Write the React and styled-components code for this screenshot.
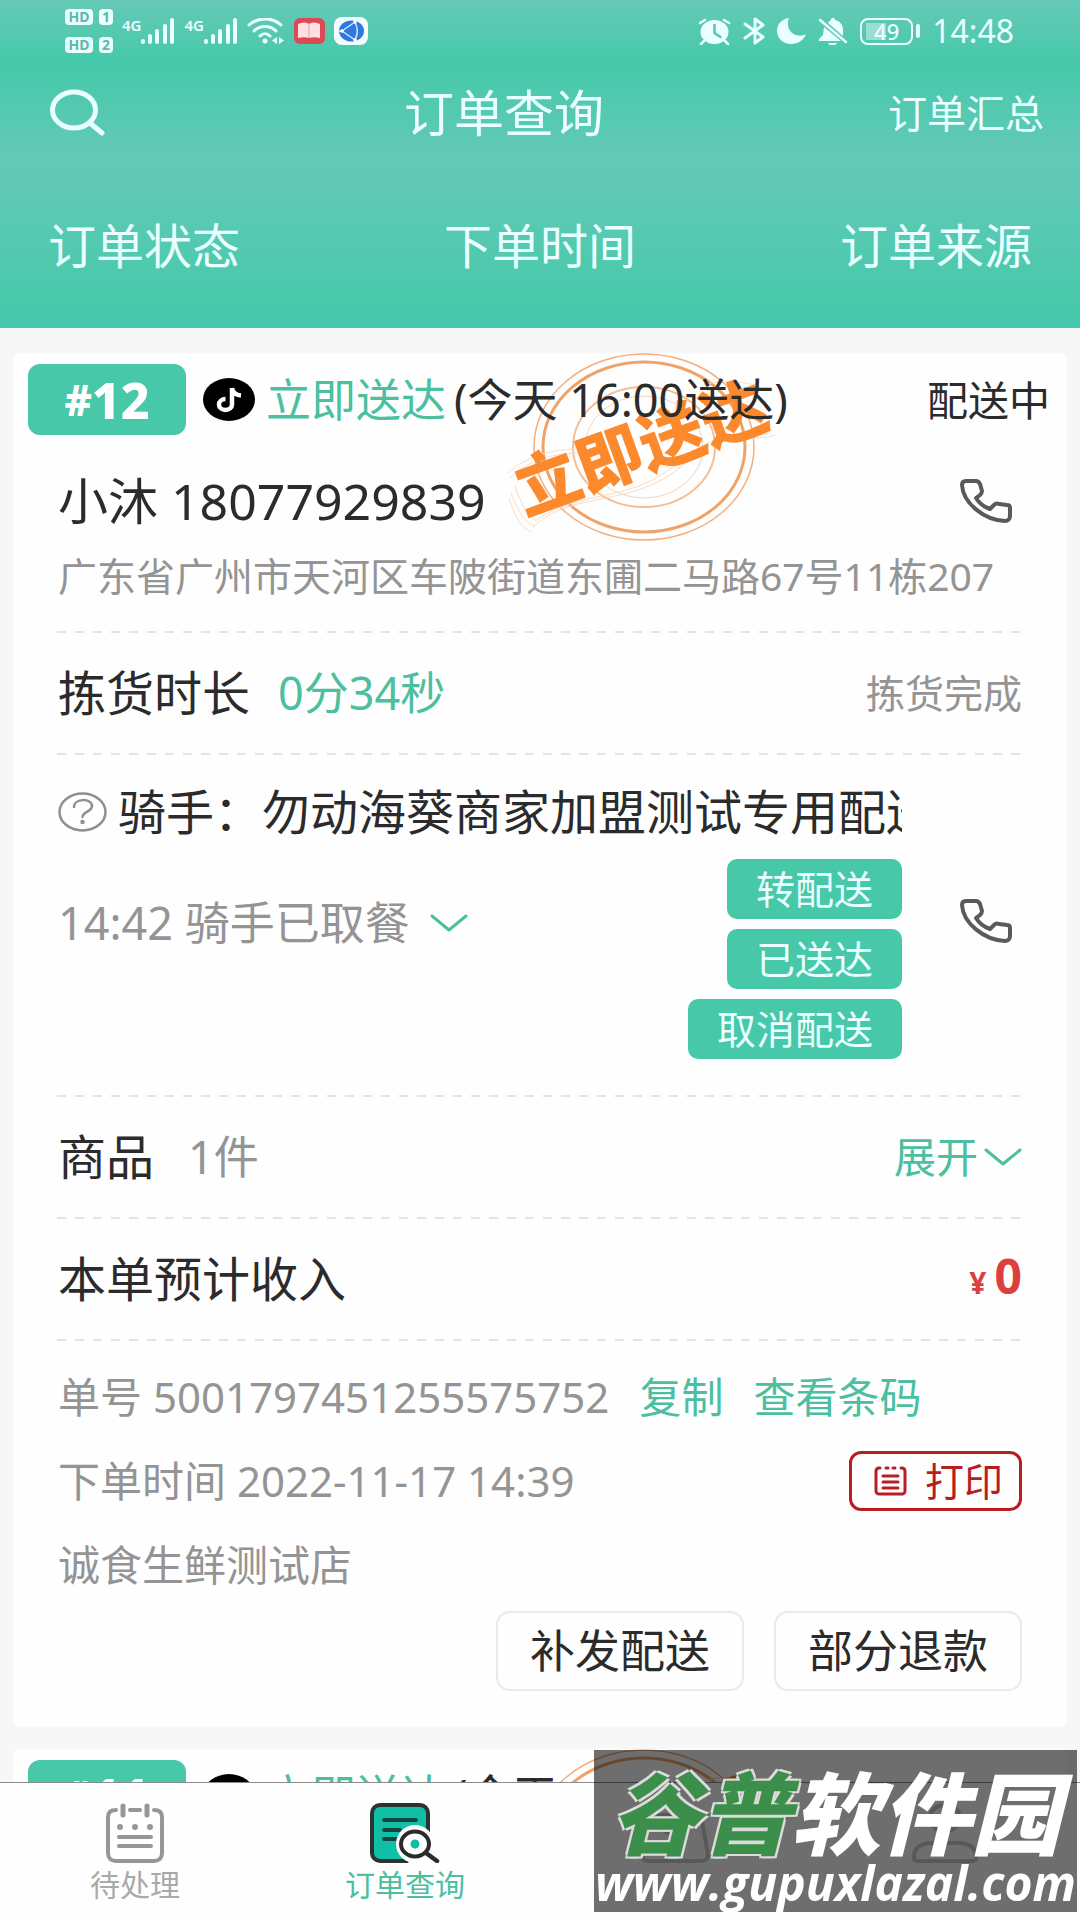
import React from "react";
import styled, { createGlobalStyle } from "styled-components";

const c = {
  green: "#46c8a9",
  greenText: "#4bbf9f",
  ink: "#2b2b2b",
  grey: "#949494",
  pale: "#eaffff",
  red: "#b91d22",
};

const Global = createGlobalStyle`
  *, *::before, *::after { box-sizing: border-box; }
  body {
    margin: 0;
    background: #f7f7f7;
    color: ${c.ink};
    font-family: "Noto Sans", "Noto Sans CJK SC", sans-serif;
  }
  button {
    margin: 0;
    padding: 0;
    border: 0;
    background: none;
    color: inherit;
    font-family: inherit;
    cursor: pointer;
  }
  h1, h2, p { margin: 0; font-weight: 400; }
  svg { display: block; flex: none; }
`;

const Screen = styled.div`
  display: flex;
  flex-direction: column;
  height: 100vh;
  overflow: hidden;
`;

/* ---------- top bar ---------- */

const TopBar = styled.header`
  flex: none;
  color: ${c.pale};
  background: linear-gradient(#66c9b7 0, #46c9aa 62px, #48c9ab 72px, #64c9b8 158px, #62c9b7 176px, #48c9ab 300px, #48c8ac 100%);
`;

const StatusBar = styled.div`
  display: flex;
  justify-content: space-between;
  height: 62px;
  padding: 0 66px 0 65px;
`;

const StatusGroup = styled.div`
  display: flex;
  align-items: center;
  height: 62px;
  gap: ${(p) => p.$gap}px;
`;

const SimRows = styled.div`
  display: grid;
  grid-template-columns: 28px 14px;
  gap: 12px 6px;
`;

const Chip = styled.span`
  height: 16px;
  border-radius: 4px;
  background: ${c.pale};
  color: #5cb9a6;
  font-size: 14px;
  font-weight: 700;
  line-height: 16px;
  text-align: center;
`;

const Signal = styled.div`
  display: flex;
  align-items: flex-start;
  font-size: 15px;
  font-weight: 600;
  line-height: 14px;
`;

const Battery = styled.div`
  display: flex;
  align-items: center;
  gap: 3px;
  &::after {
    content: "";
    width: 4px;
    height: 14px;
    border-radius: 2px;
    background: ${c.pale};
  }
`;

const BatteryBody = styled.span`
  width: 53px;
  height: 27px;
  border: 2px solid ${c.pale};
  border-radius: 8px;
  background: linear-gradient(#9bddd0, #9bddd0) 4px 3px / 20px 17px no-repeat;
  font-size: 22px;
  font-weight: 500;
  line-height: 23px;
  text-align: center;
`;

const Clock = styled.time`
  font-size: 32px;
  line-height: 40px;
`;

const TitleRow = styled.div`
  display: flex;
  align-items: center;
  justify-content: space-between;
  height: 102px;
  padding: 0 36px 0 50px;
`;

const SearchButton = styled.button`
  width: 70px;
`;

const Title = styled.h1`
  font-size: 50px;
  line-height: 60px;
`;

const HeaderButton = styled.button`
  font-size: ${(p) => p.$size}px;
  line-height: 60px;
`;

const Filters = styled.nav`
  display: flex;
  align-items: center;
  justify-content: space-between;
  height: 164px;
  padding: 0 48px;
`;

/* ---------- order cards ---------- */

const List = styled.main`
  flex: 1;
  min-height: 0;
  padding: 25px 13px 0;
  overflow-y: auto;
  scrollbar-width: none;
`;

const Card = styled.article`
  position: relative;
  margin-bottom: 22px;
  border-radius: 6px;
  background: #fefefe;
`;

const CardHead = styled.div`
  position: relative;
  z-index: 1;
  display: flex;
  align-items: center;
  padding: 11px 17px 0 15px;
`;

const Badge = styled.h2`
  display: flex;
  align-items: center;
  justify-content: center;
  width: 158px;
  height: 71px;
  margin-right: 17px;
  border-radius: 12px;
  background: ${c.green};
  color: #fff;
  font-size: 50px;
  font-weight: 800;
  line-height: 60px;
  small { font-size: 42px; }
`;

const DeliveryTime = styled.p`
  flex: 1;
  margin-left: 11px;
  font-size: 45px;
  line-height: 60px;
  white-space: nowrap;
  em {
    margin-right: 8px;
    color: ${c.greenText};
    font-style: normal;
  }
`;

const State = styled.span`
  font-size: 41px;
  line-height: 60px;
`;

const StampMark = styled.div`
  position: absolute;
  top: 0;
  left: 487px;
  width: 300px;
  height: 190px;
  svg { position: absolute; inset: 0; }
`;

const StampText = styled.span`
  position: absolute;
  top: 45px;
  left: 8px;
  color: #fc8a2c;
  font-size: 66px;
  font-weight: 900;
  line-height: 96px;
  white-space: nowrap;
  transform: rotate(-20deg);
`;

const Body = styled.div`
  position: relative;
  padding: 0 45px;
`;

const Divider = styled.hr`
  height: 2px;
  margin: 0 1px 0 -1px;
  border: 0;
  background: repeating-linear-gradient(90deg, #e4e4e4 0 9px, transparent 9px 18px);
`;

const Contact = styled.div`
  display: flex;
  align-items: center;
  justify-content: space-between;
  height: 80px;
  margin-top: 26px;
  padding-right: 10px;
  font-size: 50px;
  line-height: 60px;
`;

const Address = styled.p`
  margin: 5px 0 25px;
  color: ${c.grey};
  font-size: 39px;
  line-height: 60px;
  white-space: nowrap;
`;

const Row = styled.div`
  display: flex;
  align-items: center;
  justify-content: space-between;
  height: 120px;
`;

const Cell = styled.div`
  display: flex;
  align-items: ${(p) => p.$align || "center"};
  gap: ${(p) => p.$gap}px;
`;

const Label = styled.span`
  font-size: 48px;
  line-height: 60px;
`;

const Value = styled.span`
  color: ${(p) => p.$color};
  font-size: ${(p) => p.$size}px;
  font-weight: ${(p) => p.$weight || 400};
  line-height: 60px;
`;

const LinkButton = styled.button`
  display: flex;
  align-items: center;
  gap: 6px;
  color: ${c.greenText};
  font-size: 42px;
  line-height: 60px;
`;

const Rider = styled.section`
  display: flex;
  align-items: center;
  gap: 58px;
  padding: 27px 10px 36px 0;
`;

const RiderMain = styled.div`
  flex: 1;
  min-width: 0;
`;

const RiderName = styled.div`
  display: flex;
  align-items: center;
  gap: 11px;
  overflow: hidden;
  white-space: nowrap;
`;

const RiderDetail = styled.div`
  display: flex;
  align-items: flex-start;
  justify-content: space-between;
  margin-top: 17px;
`;

const Progress = styled.button`
  display: flex;
  align-items: center;
  gap: 20px;
  margin-top: 34px;
  color: ${c.grey};
  font-size: 45px;
  line-height: 60px;
`;

const Actions = styled.div`
  display: flex;
  flex-direction: column;
  align-items: flex-end;
  gap: 10px;
`;

const SolidButton = styled.button`
  height: 60px;
  padding: 0 29px;
  border-radius: 10px;
  background: ${c.green};
  color: ${c.pale};
  font-size: 39px;
  line-height: 60px;
`;

const Info = styled.section`
  padding-top: 14px;
  color: ${c.grey};
`;

const InfoRow = styled.div`
  display: flex;
  align-items: center;
  height: 84px;
  gap: 30px;
  font-size: 42px;
  line-height: 60px;
  white-space: nowrap;
`;

const PrintButton = styled.button`
  display: flex;
  align-items: center;
  gap: 18px;
  height: 60px;
  margin-left: auto;
  padding: 0 16px 0 22px;
  border: 3px solid ${c.red};
  border-radius: 12px;
  color: ${c.red};
  font-size: 39px;
  line-height: 54px;
`;

const CardFoot = styled.div`
  display: flex;
  justify-content: flex-end;
  gap: 30px;
  padding: 4px 0 36px;
`;

const OutlineButton = styled.button`
  height: 80px;
  padding: 0 32px;
  border: 2px solid #eaeaea;
  border-radius: 14px;
  font-size: 45px;
  line-height: 76px;
`;

/* ---------- bottom tabs ---------- */

const TabBar = styled.nav`
  display: flex;
  flex: none;
  height: 138px;
  border-top: 1px solid #8c8c8c;
  background: #fefefe;
`;

const Tab = styled.button`
  display: flex;
  flex: 1;
  flex-direction: column;
  align-items: center;
  gap: 2px;
  padding-top: 20px;
  color: ${(p) => (p.$active ? c.greenText : "#a9a9a9")};
  font-size: 30px;
  line-height: 40px;
`;

const Watermark = styled.aside`
  position: fixed;
  right: 3px;
  bottom: 8px;
  z-index: 2;
  width: 483px;
  height: 162px;
  padding-top: 10px;
  background: rgba(0, 0, 0, 0.57);
  color: #fff;
  font-style: italic;
  text-align: center;
  white-space: nowrap;
  pointer-events: none;
`;

const SiteName = styled.div`
  font-family: "Noto Sans CJK SC", sans-serif;
  font-size: 90px;
  font-weight: 900;
  line-height: 98px;
  span {
    color: #3b8f4b;
    text-shadow: -2px -2px 0 #dcdcdc, 2px -2px 0 #dcdcdc, -2px 2px 0 #dcdcdc, 2px 2px 0 #dcdcdc;
  }
`;

const SiteUrl = styled.div`
  font-family: "Open Sans", sans-serif;
  font-size: 48px;
  font-weight: 700;
  line-height: 50px;
`;

/* ---------- drawings ---------- */

const Bars = () => (
  <svg width="34" height="26" viewBox="0 0 34 26" fill={c.pale}>
    <rect x="0" y="21" width="4" height="5" rx="2" />
    <rect x="7" y="16" width="4" height="10" rx="2" />
    <rect x="14" y="11" width="4" height="15" rx="2" />
    <rect x="22" y="6" width="4" height="20" rx="2" />
    <rect x="29" y="0" width="4" height="26" rx="2" />
  </svg>
);

const Wifi = () => (
  <svg width="38" height="26" viewBox="0 0 38 26" fill="none" stroke={c.pale} strokeWidth="3" strokeLinecap="round">
    <path d="M2 7C11-1 25-1 34 7M7 13c6-6 16-6 22 0M13 18c3-3 7-3 10 0" />
    <circle cx="18" cy="23" r="2.500" fill={c.pale} stroke="none" />
    <path d="M30 19v7l-5-3.500zM32 19v7l5-3.500z" fill={c.pale} stroke="none" />
  </svg>
);

const BookApp = () => (
  <svg width="31" height="26" viewBox="0 0 31 26">
    <rect width="31" height="26" rx="6" fill="#dc4a55" />
    <path d="M4 6c4-2 8-2 11 0 3-2 7-2 11 0v14c-4-1-8-1-11 0-3-1-7-1-11 0z" fill="#ffdfe2" />
    <path d="M15 6v14" stroke="#e8a0a6" strokeWidth="1" />
  </svg>
);

const BrowserApp = () => (
  <svg width="34" height="28" viewBox="0 0 34 28">
    <rect width="34" height="28" rx="8" fill="#f1fdff" />
    <ellipse cx="17.500" cy="14" rx="12.500" ry="10.500" fill="#2f78e0" />
    <path d="M8 14L21 5M8 14l13 9M21 5c3 6 3 12 0 18M8 14l-3 0" stroke="#d5eaff" strokeWidth="1.500" fill="none" />
    <g fill="#fff"><circle cx="8" cy="14" r="1.800" /><circle cx="21" cy="5" r="1.800" /><circle cx="21" cy="23" r="1.800" /></g>
  </svg>
);

const Alarm = () => (
  <svg width="33" height="27" viewBox="0 0 33 27" fill="none" stroke={c.pale} strokeLinecap="round">
    <ellipse cx="16.500" cy="14" rx="14" ry="12" fill={c.pale} stroke="none" />
    <path d="M2 5l5-3M31 5l-5-3M6 23l-3 3M27 23l3 3" strokeWidth="2.500" />
    <path d="M16.500 7v8l6 4" stroke="#5cc5b0" strokeWidth="2.500" />
  </svg>
);

const Bluetooth = () => (
  <svg width="22" height="28" viewBox="0 0 22 28" fill="none" stroke={c.pale} strokeWidth="3" strokeLinejoin="round" strokeLinecap="round">
    <path d="M2 7l18 13-8 6V2l8 6L2 21" />
  </svg>
);

const Moon = () => (
  <svg width="29" height="26" viewBox="0 0 29 26" fill={c.pale}>
    <path d="M12 0C5 1 0 6 0 13c0 7 6 13 14 13 7 0 13-4 15-10-3 2-7 2-10 1-7-2-10-10-7-17z" />
  </svg>
);

const BellOff = () => (
  <svg width="30" height="27" viewBox="0 0 30 27" fill={c.pale}>
    <path d="M6 9l17 14H1v-2l4-4zM10 5c1-2 2-2 3-3 0-3 4-3 4 0 5 1 8 5 8 9v7z" />
    <path d="M10 25h9c-1 3-8 3-9 0z" />
    <path d="M2 2l26 22" stroke={c.pale} strokeWidth="2.500" strokeLinecap="round" />
  </svg>
);

const SearchIcon = () => (
  <svg width="55" height="48" viewBox="0 0 55 48" fill="none" stroke={c.pale} strokeWidth="5" strokeLinecap="round">
    <ellipse cx="24" cy="21" rx="21.500" ry="18" />
    <path d="M40 34l12 10" />
  </svg>
);

const NoteLogo = () => (
  <svg width="52" height="43" viewBox="0 0 52 43">
    <ellipse cx="26" cy="21.500" rx="26" ry="21.500" />
    <path d="M29 10v16.500a6.500 5.500 0 1 1-6.500-5.500M29 10c.5 4.500 4 7 9 7.500" fill="none" stroke="#fff" strokeWidth="4.500" />
  </svg>
);

const PhoneIcon = () => (
  <svg width="52" height="44" viewBox="0 0 52 44" fill="none" stroke="#5a5a5a" strokeWidth="4" strokeLinejoin="round">
    <path d="M6 2h10c2 0 3 1 4 3l2 7c0 2-1 3-2 4l-4 3c3 5 8 9 14 11l4-4c1-1 3-2 5-1l8 1c2 0 3 1 3 3v8c0 3-2 5-5 5C24 41 3 24 2 6c0-2 1-4 4-4z" />
  </svg>
);

const Chevron = () => (
  <svg width="38" height="18" viewBox="0 0 38 18" fill="none" stroke={c.greenText} strokeWidth="3" strokeLinecap="round" strokeLinejoin="round">
    <path d="M2 2l17 14L36 2" />
  </svg>
);

const HelpIcon = () => (
  <svg width="49" height="40" viewBox="0 0 49 40" fill="none" stroke="#8f8f8f" strokeWidth="2.500" strokeLinecap="round">
    <ellipse cx="24.500" cy="20" rx="23" ry="18.500" />
    <path d="M16 15c0-9 18-9 18-1 0 6-9 5-9.500 11" />
    <circle cx="24.500" cy="30" r="1" />
  </svg>
);

const PrintIcon = () => (
  <svg width="33" height="30" viewBox="0 0 33 30" fill="none" stroke={c.red} strokeWidth="3" strokeLinecap="round">
    <path d="M6 2H5a3 3 0 0 0-3 3v20a3 3 0 0 0 3 3h23a3 3 0 0 0 3-3V5a3 3 0 0 0-3-3h-1M12 2h2M19 2h2" />
    <path d="M9 10h15M9 16h15M9 22h15" />
  </svg>
);

const StampRings = () => (
  <svg width="300" height="190" viewBox="0 0 300 190" fill="none">
    <g stroke="#f3ae7c">
      <ellipse cx="144" cy="94" rx="110" ry="93" strokeWidth="1.500" />
      <ellipse cx="144" cy="94" rx="101" ry="85" stroke="#f0a368" strokeWidth="3" />
      <ellipse cx="144" cy="94" rx="71" ry="60" stroke="#f3bf99" strokeWidth="2" />
      <ellipse cx="144" cy="94" rx="59" ry="51" stroke="#f3d3bd" />
    </g>
    <g stroke="#f9dcc4">
      <path d="M8 120C25 104 49 97 75 96M10 125C27 108 51 101 77 100M11 140c8 20 14 30 24 33M15 133c6 18 12 30 22 35M9 146c8 22 12 28 22 33" />
      <path d="M33 174c40-38 100-18 150-62s55-20 92-30M35 168c50-34 90-16 140-56s60-24 96-32" />
      <path d="M203 32c20-6 40-4 58 2M207 38c20-6 36-4 50 2M247 64c10 4 18 8 24 12" />
    </g>
  </svg>
);

const CalendarIcon = () => (
  <svg width="60" height="60" viewBox="0 0 60 60" fill="none" stroke="#969696" strokeWidth="4" strokeLinecap="round">
    <path d="M11 7C5 7 3 10 3 14v36c0 5 3 8 8 8h38c5 0 8-3 8-8V14c0-4-2-7-8-7M25 7h10" />
    <path d="M18 3v9M42 3v9" strokeWidth="5" />
    <path d="M14 34h32M14 43h32" />
    <g fill="#969696" stroke="none"><circle cx="15" cy="24" r="3" /><circle cx="30" cy="24" r="3" /><circle cx="45" cy="24" r="3" /></g>
  </svg>
);

const OrderSearchIcon = () => (
  <svg width="70" height="60" viewBox="0 0 70 60" fill="none" strokeLinecap="round">
    <rect x="2" y="2" width="56" height="56" rx="8" fill="#0fbfa6" stroke="#2b3331" strokeWidth="4" />
    <path d="M14 17h32M14 27h16M14 36h14" stroke="#14453e" strokeWidth="4" />
    <path d="M38 60h24V28z" fill="#fefefe" />
    <circle cx="45" cy="41" r="19" fill="#fefefe" />
    <ellipse cx="45" cy="41" rx="14" ry="12.500" fill="#fefefe" stroke="#2b2b2b" strokeWidth="4" />
    <circle cx="45" cy="41" r="4.500" fill="#12bd9f" />
    <path d="M56 50l11 8" stroke="#2b2b2b" strokeWidth="4.500" />
  </svg>
);

const BagIcon = () => (
  <svg width="70" height="60" viewBox="0 0 70 60" fill="none" stroke="#cccccc" strokeWidth="4" strokeLinejoin="round">
    <path d="M9 12h52l7 40c0 4-3 6-6 6H8c-3 0-6-2-6-6z" />
    <path d="M19 16c0 20 32 20 32 0" />
  </svg>
);

const UserIcon = () => (
  <svg width="66" height="60" viewBox="0 0 66 60" fill="none" stroke="#cccccc" strokeWidth="4" strokeLinejoin="round">
    <ellipse cx="33" cy="15" rx="15" ry="13" />
    <path d="M2 54c0-10 8-14 18-14h26c10 0 18 4 18 14 0 3-1 4-4 4H6c-3 0-4-1-4-4z" />
  </svg>
);

/* ---------- page ---------- */

const orders = [
  {
    no: "12",
    time: "(今天 16:00送达)",
    state: "配送中",
    detail: {
      customer: "小沐 18077929839",
      address: "广东省广州市天河区车陂街道东圃二马路67号11栋207",
      picking: "0分34秒",
      rider: "勿动海葵商家加盟测试专用配送",
      progress: "14:42 骑手已取餐",
      count: "1件",
      income: "0",
      id: "5001797451255575752",
      placed: "2022-11-17 14:39",
      shop: "诚食生鲜测试店",
    },
  },
  { no: "11", time: "(今天" },
];

function Stamp() {
  return (
    <StampMark aria-hidden="true">
      <StampRings />
      <StampText>立即送达</StampText>
    </StampMark>
  );
}

function OrderDetail({ d }) {
  return (
    <Body>
      <Contact>
        <span>{d.customer}</span>
        <button aria-label="联系顾客"><PhoneIcon /></button>
      </Contact>
      <Address>{d.address}</Address>
      <Divider />
      <Row>
        <Cell $gap={28}>
          <Label>拣货时长</Label>
          <Value $color={c.greenText} $size={45}>{d.picking}</Value>
        </Cell>
        <Value $color={c.grey} $size={39}>拣货完成</Value>
      </Row>
      <Divider />
      <Rider>
        <RiderMain>
          <RiderName>
            <HelpIcon />
            <Label>骑手：{d.rider}</Label>
          </RiderName>
          <RiderDetail>
            <Progress>{d.progress}<Chevron /></Progress>
            <Actions>
              <SolidButton>转配送</SolidButton>
              <SolidButton>已送达</SolidButton>
              <SolidButton>取消配送</SolidButton>
            </Actions>
          </RiderDetail>
        </RiderMain>
        <button aria-label="联系骑手"><PhoneIcon /></button>
      </Rider>
      <Divider />
      <Row>
        <Cell $gap={34}>
          <Label>商品</Label>
          <Value $color={c.grey} $size={45}>{d.count}</Value>
        </Cell>
        <LinkButton>展开<Chevron /></LinkButton>
      </Row>
      <Divider />
      <Row>
        <Label>本单预计收入</Label>
        <Cell $gap={8} $align="baseline">
          <Value $color="#dc403e" $size={30} $weight={700}>¥</Value>
          <Value $color="#dc403e" $size={48} $weight={700}>{d.income}</Value>
        </Cell>
      </Row>
      <Divider />
      <Info>
        <InfoRow>
          <span>单号 {d.id}</span>
          <LinkButton>复制</LinkButton>
          <LinkButton>查看条码</LinkButton>
        </InfoRow>
        <InfoRow>
          <span>下单时间 {d.placed}</span>
          <PrintButton><PrintIcon />打印</PrintButton>
        </InfoRow>
        <InfoRow>{d.shop}</InfoRow>
      </Info>
      <CardFoot>
        <OutlineButton>补发配送</OutlineButton>
        <OutlineButton>部分退款</OutlineButton>
      </CardFoot>
    </Body>
  );
}

export default function App() {
  return (
    <Screen>
      <Global />
      <TopBar>
        <StatusBar>
          <StatusGroup $gap={9}>
            <SimRows>
              <Chip>HD</Chip><Chip>1</Chip>
              <Chip>HD</Chip><Chip>2</Chip>
            </SimRows>
            <Signal>4G<Bars /></Signal>
            <Signal>4G<Bars /></Signal>
            <Wifi />
            <BookApp />
            <BrowserApp />
          </StatusGroup>
          <StatusGroup $gap={12}>
            <Alarm />
            <Bluetooth />
            <Moon />
            <BellOff />
            <Battery><BatteryBody>49</BatteryBody></Battery>
            <Clock>14:48</Clock>
          </StatusGroup>
        </StatusBar>
        <TitleRow>
          <SearchButton aria-label="搜索"><SearchIcon /></SearchButton>
          <Title>订单查询</Title>
          <HeaderButton $size={39}>订单汇总</HeaderButton>
        </TitleRow>
        <Filters>
          <HeaderButton $size={48}>订单状态</HeaderButton>
          <HeaderButton $size={48}>下单时间</HeaderButton>
          <HeaderButton $size={48}>订单来源</HeaderButton>
        </Filters>
      </TopBar>

      <List>
        {orders.map((o) => (
          <Card key={o.no}>
            <Stamp />
            <CardHead>
              <Badge><small>#</small>{o.no}</Badge>
              <NoteLogo />
              <DeliveryTime><em>立即送达</em>{o.time}</DeliveryTime>
              {o.state && <State>{o.state}</State>}
            </CardHead>
            {o.detail && <OrderDetail d={o.detail} />}
          </Card>
        ))}
      </List>

      <TabBar>
        <Tab><CalendarIcon />待处理</Tab>
        <Tab $active aria-current="page"><OrderSearchIcon />订单查询</Tab>
        <Tab aria-label="商品"><BagIcon /></Tab>
        <Tab aria-label="我的"><UserIcon /></Tab>
      </TabBar>

      <Watermark>
        <SiteName><span>谷普</span>软件园</SiteName>
        <SiteUrl>www.gupuxlazal.com</SiteUrl>
      </Watermark>
    </Screen>
  );
}
